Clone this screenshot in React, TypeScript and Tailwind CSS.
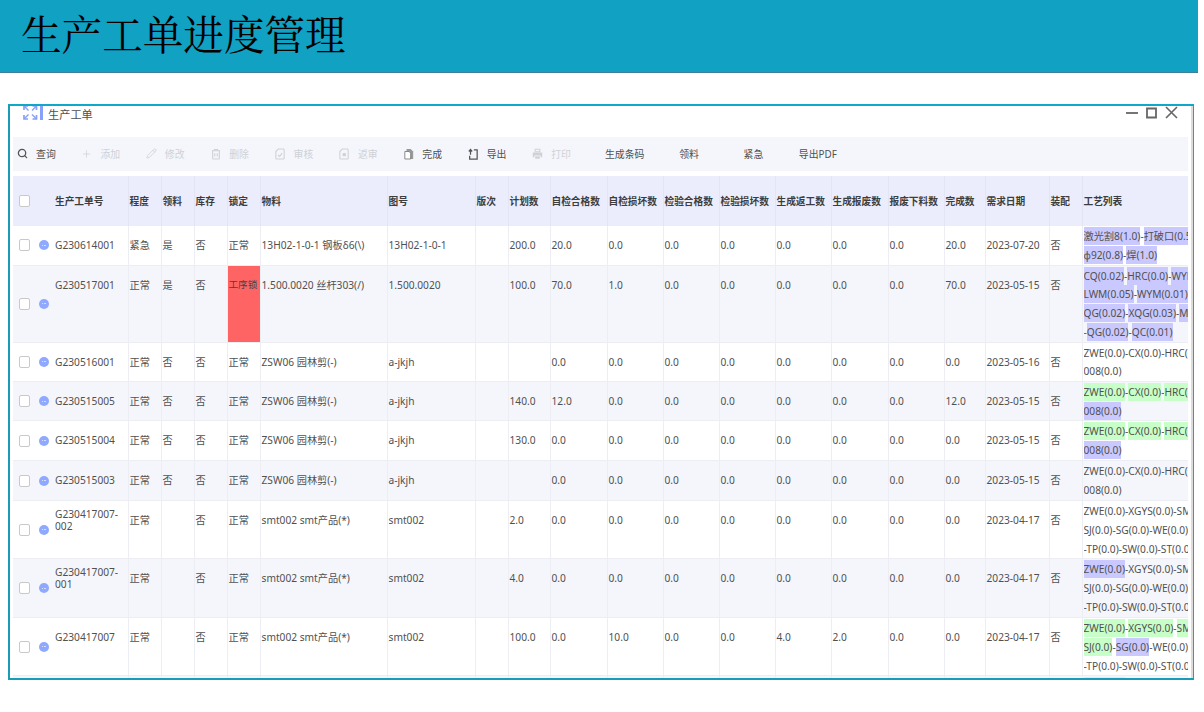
import React from 'react';
import { Search, Plus, Pencil } from 'lucide-react';

type Seg = [string, ('b' | 'g')?];
type Row = {
  h: string;
  cells: string[];
  lines: Seg[][];
  alt?: boolean;
};

const widths = ['w-[23px]', 'w-[16px]', 'w-[76px]', 'w-[33px]', 'w-[33px]', 'w-[33px]', 'w-[33px]', 'w-[127px]', 'w-[88px]', 'w-[33px]', 'w-[42px]', 'w-[57px]', 'w-[56px]', 'w-[56px]', 'w-[56px]', 'w-[56px]', 'w-[57px]', 'w-[56px]', 'w-[41px]', 'w-[64px]', 'w-[33px]', 'w-[106px]'];

const heads = ['程度', '领料', '库存', '锁定', '物料', '图号', '版次', '计划数', '自检合格数', '自检损坏数', '检验合格数', '检验损坏数', '生成返工数', '生成报废数', '报废下料数', '完成数', '需求日期', '装配', '工艺列表'];

const zwe = (a?: 'b' | 'g', b?: 'b' | 'g', c?: 'b' | 'g', d?: 'b' | 'g'): Seg[][] => [
  [['ZWE(0.0)', a], ['-'], ['CX(0.0)', b], ['-'], ['HRC(0.0)', c]],
  [['008(0.0)', d]],
];

const smt = (a?: 'b' | 'g', b?: 'b' | 'g', c?: 'b' | 'g', d?: 'b' | 'g', e?: 'b' | 'g'): Seg[][] => [
  [['ZWE(0.0)', a], ['-'], ['XGYS(0.0)', b], ['-'], ['SMT(0.0)', c]],
  [['SJ(0.0)', d], ['-'], ['SG(0.0)', e], ['-WE(0.0)-SP(0.0)']],
  [['-TP(0.0)-SW(0.0)-ST(0.0)-QC(0.0)']],
];

const rows: Row[] = [
  {
    h: 'h-[39px]',
    cells: ['G230614001', '紧急', '是', '否', '正常', '13H02-1-0-1 钢板δ6(\\)', '13H02-1-0-1', '', '200.0', '20.0', '0.0', '0.0', '0.0', '0.0', '0.0', '0.0', '20.0', '2023-07-20', '否'],
    lines: [[['激光割8(1.0)', 'b'], ['-'], ['打破口(0.5)', 'b']], [['φ92(0.8)', 'b'], ['-'], ['焊(1.0)', 'b']]],
  },
  {
    h: 'h-[77px]',
    alt: true,
    cells: ['G230517001', '正常', '是', '否', '工序锁', '1.500.0020 丝杆303(/)', '1.500.0020', '', '100.0', '70.0', '1.0', '0.0', '0.0', '0.0', '0.0', '0.0', '70.0', '2023-05-15', '否'],
    lines: [
      [['CQ(0.02)', 'b'], ['-'], ['HRC(0.0)', 'b'], ['-'], ['WYM(0.01)', 'b']],
      [['LWM(0.05)', 'b'], ['-'], ['WYM(0.01)', 'b']],
      [['QG(0.02)', 'b'], ['-'], ['XQG(0.03)', 'b'], ['-'], ['MQ(0.01)', 'b']],
      [['-'], ['QG(0.02)', 'b'], ['-'], ['QC(0.01)', 'b']],
    ],
  },
  {
    h: 'h-[39px]',
    cells: ['G230516001', '正常', '否', '否', '正常', 'ZSW06 园林剪(-)', 'a-jkjh', '', '', '0.0', '0.0', '0.0', '0.0', '0.0', '0.0', '0.0', '0.0', '2023-05-16', '否'],
    lines: zwe(),
  },
  {
    h: 'h-[39px]',
    alt: true,
    cells: ['G230515005', '正常', '否', '否', '正常', 'ZSW06 园林剪(-)', 'a-jkjh', '', '140.0', '12.0', '0.0', '0.0', '0.0', '0.0', '0.0', '0.0', '12.0', '2023-05-15', '否'],
    lines: zwe('g', 'g', 'g', 'b'),
  },
  {
    h: 'h-[40px]',
    cells: ['G230515004', '正常', '否', '否', '正常', 'ZSW06 园林剪(-)', 'a-jkjh', '', '130.0', '0.0', '0.0', '0.0', '0.0', '0.0', '0.0', '0.0', '0.0', '2023-05-15', '否'],
    lines: zwe('g', 'g', 'g', 'b'),
  },
  {
    h: 'h-[40px]',
    alt: true,
    cells: ['G230515003', '正常', '否', '否', '正常', 'ZSW06 园林剪(-)', 'a-jkjh', '', '', '0.0', '0.0', '0.0', '0.0', '0.0', '0.0', '0.0', '0.0', '2023-05-15', '否'],
    lines: zwe(),
  },
  {
    h: 'h-[58px]',
    cells: ['G230417007-\n002', '正常', '', '否', '正常', 'smt002 smt产品(*)', 'smt002', '', '2.0', '0.0', '0.0', '0.0', '0.0', '0.0', '0.0', '0.0', '0.0', '2023-04-17', '否'],
    lines: smt(),
  },
  {
    h: 'h-[59px]',
    alt: true,
    cells: ['G230417007-\n001', '正常', '', '否', '正常', 'smt002 smt产品(*)', 'smt002', '', '4.0', '0.0', '0.0', '0.0', '0.0', '0.0', '0.0', '0.0', '0.0', '2023-04-17', '否'],
    lines: smt('b'),
  },
  {
    h: 'h-[58px]',
    cells: ['G230417007', '正常', '', '否', '正常', 'smt002 smt产品(*)', 'smt002', '', '100.0', '0.0', '10.0', '0.0', '0.0', '4.0', '2.0', '0.0', '0.0', '2023-04-17', '否'],
    lines: smt('g', 'g', 'g', 'g', 'b'),
  },
  {
    h: 'h-[40px]',
    alt: true,
    cells: ['', '', '', '', '', '', '', '', '', '', '', '', '', '', '', '', '', '', ''],
    lines: [[['ZWE(0.0)', 'g']]],
  },
];

const Doc = ({ mark }: { mark: 'check' | 'dot' | 'none' }) => (
  <svg viewBox="0 0 12 14" className="w-[10px] h-[12px]" fill="none" stroke="currentColor" strokeWidth="1.3">
    <path d="M4 1h6a1 1 0 0 1 1 1v10a1 1 0 0 1-1 1H2a1 1 0 0 1-1-1V4z" />
    {mark === 'check' && <path d="M3.5 8l2 2 3-4" />}
    {mark === 'dot' && <rect x="5" y="6.5" width="2.5" height="2.5" fill="currentColor" />}
  </svg>
);

const Trash = () => (
  <svg viewBox="0 0 12 14" className="w-[10px] h-[12px]" fill="none" stroke="currentColor" strokeWidth="1.3">
    <path d="M1 3h10M4 3V1.5h4V3M2 3v9a1 1 0 0 0 1 1h6a1 1 0 0 0 1-1V3" />
    <path d="M4.5 6v4M7.5 6v4" />
  </svg>
);

const Pages = () => (
  <svg viewBox="0 0 12 14" className="w-[10px] h-[12px]">
    <path d="M3 1h5l3 3v9H3z" fill="#999" />
    <path d="M1 4h5l2 2v7H1z" fill="#fff" stroke="#777" strokeWidth="1" />
  </svg>
);

const ExportIcon = () => (
  <svg viewBox="0 0 12 14" className="w-[10px] h-[12px]" fill="none" stroke="#555" strokeWidth="1.5">
    <path d="M7 2h4v11H2v-4" />
    <path d="M3 8V2M1 4l2-2.5L5 4" />
  </svg>
);

const Printer = () => (
  <svg viewBox="0 0 14 14" className="w-[11px] h-[12px]" fill="currentColor">
    <path d="M4 1h6v3H4z" fill="none" stroke="currentColor" strokeWidth="1.3" />
    <path d="M1 5h12v6h-2V9H3v2H1z" />
    <path d="M4 10h6v3H4z" />
  </svg>
);

const tools: { label: string; icon?: React.ReactNode; off?: boolean }[] = [
  { label: '查询', icon: <Search size={13} strokeWidth={2.8} className="text-[#555]" /> },
  { label: '添加', off: true, icon: <Plus size={16} strokeWidth={1.6} /> },
  { label: '修改', off: true, icon: <Pencil size={13} strokeWidth={1.8} /> },
  { label: '删除', off: true, icon: <Trash /> },
  { label: '审核', off: true, icon: <Doc mark="check" /> },
  { label: '返审', off: true, icon: <Doc mark="dot" /> },
  { label: '完成', icon: <Pages /> },
  { label: '导出', icon: <ExportIcon /> },
  { label: '打印', off: true, icon: <Printer /> },
  { label: '生成条码' },
  { label: '领料' },
  { label: '紧急' },
  { label: '导出PDF' },
];

const Box = () => <span className="block w-[11px] h-[12px] bg-white border border-[#c9c9c9] rounded-[2px] mx-auto" />;

const Dot = () => (
  <span className="flex items-center justify-center gap-[0.5px] w-[10px] h-[10px] mx-auto rounded-full bg-[#8fa9ff]">
    <i className="w-[1px] h-[1px] bg-[#d5dfff]" />
    <i className="w-[1px] h-[1px] bg-[#d5dfff]" />
    <i className="w-[1px] h-[1px] bg-[#d5dfff]" />
  </span>
);

export default function App() {
  return (
    <div className="w-[1204px] h-[712px] bg-white overflow-hidden font-['Noto_Sans','Noto_Sans_CJK_SC',sans-serif] text-[10.2px] text-[#505050]">
      <header className="w-[1198px] h-[73px] bg-[#10a1c3] border-b border-[#3f7f99] pl-[21px] flex items-center">
        <h1 className="text-[40.6px] leading-none text-black font-normal mt-[3px] font-['Liberation_Serif','Noto_Serif_CJK_SC','Noto_Sans_CJK_SC',serif]">生产工单进度管理</h1>
      </header>

      <div className="mt-[31px] ml-[8px] w-[1186px] h-[576px] border-t-2 border-l-2 border-r border-b-2 border-t-[#0fa8c9] border-l-[#1a9cb8] border-r-[#12a5c5] border-b-[#1a9cb8] overflow-hidden">
        <div className="h-full pl-[3px] border-r-2 border-[#dcdcdc]">
          <div className="relative h-[30px] overflow-hidden">
            <svg viewBox="0 0 21 15" className="absolute left-[10px] -top-[1px] w-[21px] h-[15px]" fill="none" stroke="#86a0fb" strokeWidth="1.7">
              <path d="M1 5V1h4M13.5 5V1h-4M1 10v4h4M13.5 10v4h-4" />
              <path d="M1.5 1.5L5.5 5.5M13 1.5L9 5.5M1.5 13.5L5.5 9.5M13 13.5L9 9.5" strokeWidth="1.4" />
              <path d="M18.5 0v15" strokeWidth="3" />
            </svg>
            <span className="absolute left-[35px] top-[1px] text-[11.2px] leading-[16px]">生产工单</span>
            <div className="absolute right-[13px] top-0 flex items-center gap-[8px] text-[#666]">
              <svg viewBox="0 0 12 12" className="w-[12px] h-[12px]" fill="none" stroke="currentColor" strokeWidth="1.8"><path d="M0 6h12" /></svg>
              <svg viewBox="0 0 11 12" className="w-[11px] h-[12px]" fill="none" stroke="currentColor" strokeWidth="1.8"><path d="M1 1.5h9v9H1z" /></svg>
              <svg viewBox="0 0 13 13" className="w-[13px] h-[13px]" fill="none" stroke="currentColor" strokeWidth="1.6"><path d="M1 1l11 11M12 1L1 12" /></svg>
            </div>
          </div>

          <div className="w-[1175px] h-[34px] mt-[1px] bg-[#f5f6fb] flex items-center text-[9.9px]">
            {tools.map((t) => (
              <div
                key={t.label}
                className={`w-[64.4px] shrink-0 flex items-center gap-[8px] ${t.icon ? 'pl-[4px]' : 'justify-center'} ${t.off ? 'text-[#cfd1d6]' : 'text-[#505050]'}`}
              >
                {t.icon && <span className="w-[11px] flex justify-center">{t.icon}</span>}
                <span className="whitespace-nowrap">{t.label}</span>
              </div>
            ))}
          </div>

          <table className="w-[1175px] mt-[5px] table-fixed border-collapse">
            <colgroup>
              {widths.map((w, i) => (
                <col key={i} className={w} />
              ))}
            </colgroup>
            <thead>
              <tr className="h-[50px] bg-[#ebedfc] text-[#3d3d3d] text-[9.7px]">
                <th colSpan={2} className="p-0 align-middle">
                  <span className="block w-[23px]"><Box /></span>
                </th>
                <th className="pl-[3px] pt-[2px] text-left font-bold whitespace-nowrap border-r border-[#e3e5f4]">生产工单号</th>
                {heads.map((h) => (
                  <th key={h} className="px-px pt-[2px] text-left font-bold whitespace-nowrap overflow-hidden border-r border-[#e3e5f4] last:border-r-0">{h}</th>
                ))}
              </tr>
            </thead>
            <tbody>
              {rows.map((r, idx) => (
                <tr key={idx} className={`${r.h} ${r.alt ? 'bg-[#f5f6fb]' : 'bg-white'}`}>
                  <td className="p-0 align-middle border-b border-[#eceef4]"><Box /></td>
                  <td className="p-0 align-middle border-b border-[#eceef4]"><Dot /></td>
                  <td className={`pl-[3px] align-top whitespace-pre-line leading-[12px] border-r border-b border-[#eceef4] ${r.cells[0].includes('\n') ? 'pt-[7px]' : 'pt-[13px]'}`}>{r.cells[0]}</td>
                  {r.cells.slice(1).map((c, i) => (
                    <td
                      key={i}
                      className={`px-px pt-[13px] align-top leading-[12px] whitespace-nowrap overflow-hidden border-r border-b border-[#eceef4] ${c === '工序锁' ? 'bg-[#ff6464] text-[#444] text-[9.6px]' : ''}`}
                    >
                      {c}
                    </td>
                  ))}
                  <td className="pl-px pt-px align-top overflow-hidden border-b border-[#eceef4]">
                    {r.lines.map((line, li) => (
                      <div key={li} className="h-[18.7px] leading-[18px] whitespace-nowrap overflow-hidden">
                        {line.map(([txt, tone], si) => (
                          <span
                            key={si}
                            className={`inline-block h-[18px] ${tone === 'b' ? 'bg-[#c9c9ff]' : tone === 'g' ? 'bg-[#c8ffc8]' : ''}`}
                          >
                            {txt}
                          </span>
                        ))}
                      </div>
                    ))}
                  </td>
                </tr>
              ))}
            </tbody>
          </table>
        </div>
      </div>
    </div>
  );
}
